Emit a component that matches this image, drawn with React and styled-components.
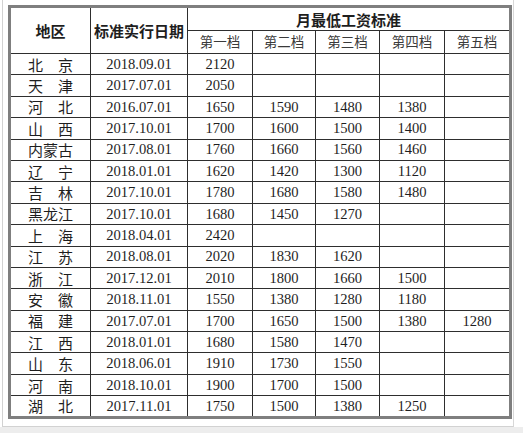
import React from "react";
import styled, { createGlobalStyle } from "styled-components";

const GlobalStyle = createGlobalStyle`
  html, body {
    margin: 0;
    padding: 0;
    background: #ffffff;
  }
  body {
    width: 523px;
    height: 433px;
    overflow: hidden;
  }
`;

const Screen = styled.div`
  display: flex;
  flex-direction: column;
  width: 523px;
  height: 433px;
`;

const Frame = styled.div`
  margin-left: 2px;
  width: 505px;
  height: 421px;
  padding: 5px 0 0 5px;
  border-left: 1px solid #d2d2d2;
  border-right: 1px solid #d8d8d8;
  border-bottom: 1px solid #d2d2d2;
`;

const Footer = styled.div`
  flex: 1;
  background: #ededed;
`;

const Table = styled.table`
  width: 501px;
  border-collapse: collapse;
  border: 3px solid #7f7f7f;
  table-layout: fixed;
  color: #1e1e1e;
`;

const HeadCell = styled.th`
  border: 1px solid #2e2e2e;
  height: ${p => (p.tall ? "44px" : "22px")};
  padding: 0;
  font-family: "Noto Sans CJK SC", sans-serif;
  font-size: 15px;
  font-weight: 700;
  text-align: center;
  vertical-align: middle;
  line-height: 1;
`;

const TierCell = styled.th`
  border: 1px solid #2e2e2e;
  height: 22px;
  padding: 0;
  font-family: "Noto Sans CJK SC", sans-serif;
  font-size: 13.5px;
  font-weight: 400;
  color: #3a3a3a;
  text-align: center;
  line-height: 1;
`;

const Row = styled.tr`
  height: 21.4px;
`;

const Cell = styled.td`
  border: 1px solid #2e2e2e;
  padding: 0;
  text-align: center;
  vertical-align: middle;
  line-height: 1;
  font-family: ${p =>
    p.cjk ? '"Noto Sans CJK SC", sans-serif' : '"Liberation Serif", serif'};
  font-size: ${p => (p.cjk ? "15px" : "14.6px")};
  white-space: pre;
`;

const widths = [81, 97, 65, 63, 64, 65, 66];

const rows = [
  ["北　京", "2018.09.01", "2120"],
  ["天　津", "2017.07.01", "2050"],
  ["河　北", "2016.07.01", "1650", "1590", "1480", "1380"],
  ["山　西", "2017.10.01", "1700", "1600", "1500", "1400"],
  ["内蒙古", "2017.08.01", "1760", "1660", "1560", "1460"],
  ["辽　宁", "2018.01.01", "1620", "1420", "1300", "1120"],
  ["吉　林", "2017.10.01", "1780", "1680", "1580", "1480"],
  ["黑龙江", "2017.10.01", "1680", "1450", "1270"],
  ["上　海", "2018.04.01", "2420"],
  ["江　苏", "2018.08.01", "2020", "1830", "1620"],
  ["浙　江", "2017.12.01", "2010", "1800", "1660", "1500"],
  ["安　徽", "2018.11.01", "1550", "1380", "1280", "1180"],
  ["福　建", "2017.07.01", "1700", "1650", "1500", "1380", "1280"],
  ["江　西", "2018.01.01", "1680", "1580", "1470"],
  ["山　东", "2018.06.01", "1910", "1730", "1550"],
  ["河　南", "2018.10.01", "1900", "1700", "1500"],
  ["湖　北", "2017.11.01", "1750", "1500", "1380", "1250"],
];

const tiers = ["第一档", "第二档", "第三档", "第四档", "第五档"];

export default function App() {
  return (
    <Screen>
      <GlobalStyle />
      <Frame>
        <Table>
          <colgroup>
            {widths.map((w, i) => (
              <col key={i} style={{ width: w }} />
            ))}
          </colgroup>
          <thead>
            <tr>
              <HeadCell rowSpan={2} tall>地区</HeadCell>
              <HeadCell rowSpan={2} tall>标准实行日期</HeadCell>
              <HeadCell colSpan={5}>月最低工资标准</HeadCell>
            </tr>
            <tr>
              {tiers.map(t => (
                <TierCell key={t}>{t}</TierCell>
              ))}
            </tr>
          </thead>
          <tbody>
            {rows.map(r => (
              <Row key={r[0]}>
                <Cell cjk>{r[0]}</Cell>
                {Array.from({ length: 6 }).map((_, i) => (
                  <Cell key={i}>{r[i + 1] || ""}</Cell>
                ))}
              </Row>
            ))}
          </tbody>
        </Table>
      </Frame>
      <Footer />
    </Screen>
  );
}
